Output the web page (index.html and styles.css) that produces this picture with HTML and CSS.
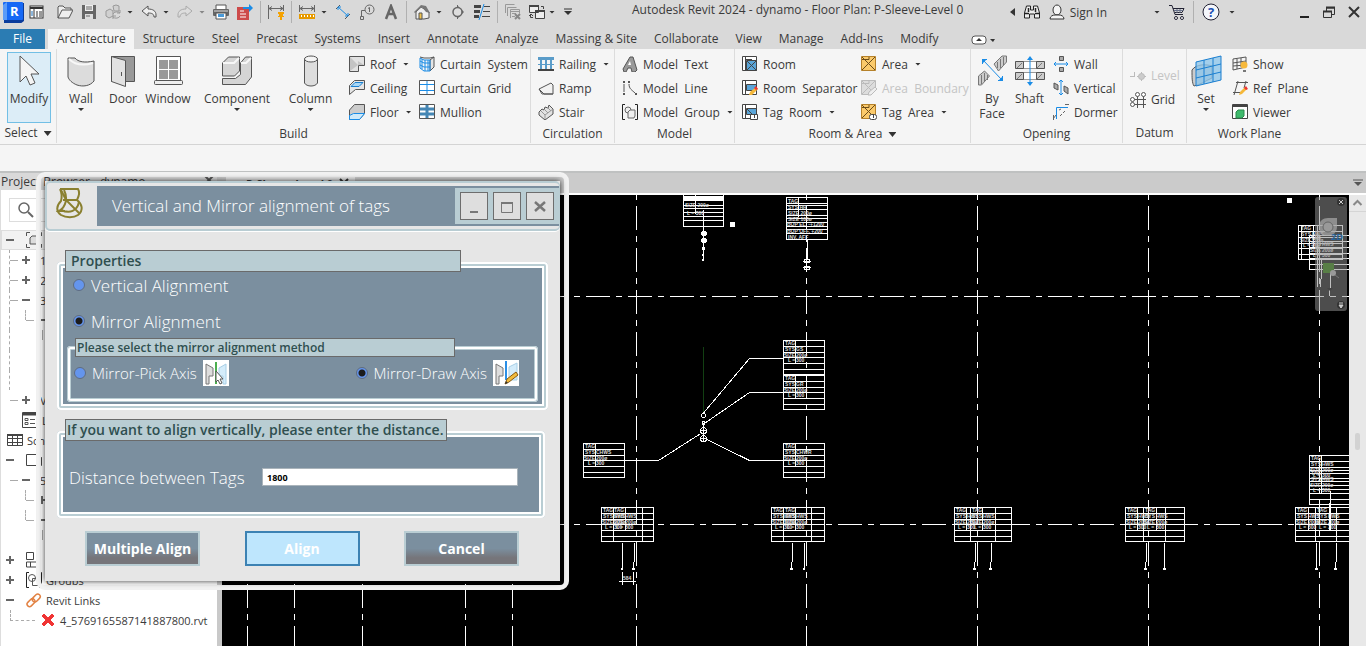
FILE: index.html
```html
<!DOCTYPE html>
<html lang="en">
<head>
    <meta charset="UTF-8">
    <meta name="viewport" content="width=device-width, initial-scale=1.0">
    <title>Autodesk Revit 2024 - dynamo</title>
    <link rel="stylesheet" href="styles.css">
</head>
<body>
    <!-- Title bar with quick access tools -->
    <header class="titlebar">
        <div class="quick">
            <svg class="logo" viewBox="0 0 22 22"><path d="M2 6l5-4h15v18l-4 3H2z" fill="#0b3c9c"/><rect x="1" y="1" width="20" height="18" rx="1" fill="#1668f5"/><path d="M1 4l4-3v18H1z" fill="#5b9bf8"/><text x="8" y="15" font-size="13" font-weight="700" fill="#fff">R</text></svg>
            <button class="ico home" aria-label="Home"><svg viewBox="0 0 16 16"><rect x="1" y="2" width="13" height="12" fill="#fff" stroke="#333"/><path d="M1 3h13v2H1z" fill="#333"/><path d="M5 5v9" stroke="#333"/><path d="M3 7v5" stroke="#1b6fb8"/><path d="M7 8h2m1 0h3M7 10h2m1 0h3M7 12h2m1 0h3" stroke="#333"/></svg></button>
            <button class="ico" aria-label="Open"><svg viewBox="0 0 16 16"><path d="M1 14V3l1-1h4l2 2h6v2M1 14L5 6h11l-4 8z" fill="#eee" stroke="#555"/></svg></button>
            <button class="ico" aria-label="Save"><svg viewBox="0 0 16 16"><path d="M1 1h14v14H1z" fill="#666"/><path d="M4 1h8v6H4z" fill="#eee"/><path d="M4 10h8v5H4z" fill="#ddd"/><path d="M5 3h6M5 5h6M5 12h4" stroke="#666"/></svg></button>
            <button class="ico" aria-label="Synchronize"><svg viewBox="0 0 16 16"><path d="M1 7l4-2 3 2v5l-4 2-3-2zM8 2l3-1 3 1v5H9z" fill="#d0d0d0" stroke="#999"/><path d="M8 10a4 3 0 0 1 7-1m0 3a4 3 0 0 1-7 1M15 6v3h-3M8 15v-3h3" fill="none" stroke="#999"/></svg></button>
            <span class="caret"></span>
            <button class="ico" aria-label="Undo"><svg viewBox="0 0 16 16"><path d="M1 7l6-5v3c5 0 8 2 8 6v2h-2c0-3-2-4-6-4v3z" fill="#eee" stroke="#555"/></svg></button>
            <span class="caret"></span>
            <button class="ico" aria-label="Redo"><svg viewBox="0 0 16 16"><path d="M15 7L9 2v3c-5 0-8 2-8 6v2h2c0-3 2-4 6-4v3z" fill="#ddd" stroke="#aaa"/></svg></button>
            <span class="caret faded"></span>
            <button class="ico" aria-label="Print"><svg viewBox="0 0 16 16"><path d="M3 1h10v5H3z" fill="#fff" stroke="#555"/><rect y="5" width="16" height="7" rx="1" fill="#666"/><path d="M1 7h14" stroke="#ddd"/><path d="M3 9h10v6H3z" fill="#fff" stroke="#555"/><path d="M5 10h6v3H5z" fill="#4a9ad8"/></svg></button>
            <button class="ico" aria-label="Export PDF"><svg viewBox="0 0 16 16"><path d="M0 3h12v13H0z" fill="#cd4a4a"/><path d="M3 7h4M3 10h6M3 13h6" stroke="#fff"/><path d="M6 3h6V0l4 4-4 4V5H6z" fill="#1a8ce6"/></svg></button>
            <span class="sep"></span>
            <button class="ico" aria-label="Align dimension"><svg viewBox="0 0 16 16"><path d="M.500 1v14M15.500 1v6M1 4.500h14M4 2.500l-3 2 3 2M12 2.500l3 2-3 2" fill="none" stroke="#666"/><path d="M10 8h6v2h-1v2h1v1h-6v-1h1v-2h-1zM12 12h2v4h-2z" fill="#f5a200"/></svg></button>
            <span class="sep"></span>
            <button class="ico" aria-label="Measure"><svg viewBox="0 0 16 16"><path d="M.500 1v7M15.500 1v7M1 4.500h14M4 2.500l-3 2 3 2M12 2.500l3 2-3 2" fill="none" stroke="#666"/><path d="M0 10h16v5H0z" fill="#e69a00"/><path d="M2.500 11v2m3-2v2m3-2v2m3-2v2m3-2v2" stroke="#fff"/></svg></button>
            <span class="caret"></span>
            <button class="ico" aria-label="Dimension"><svg viewBox="0 0 16 16"><path d="M1 5l4-4M10 15l5-5" stroke="#555"/><path d="M3 3l10 9M3 6V3h3M13 9v3h-3" fill="none" stroke="#1a8ce6"/></svg></button>
            <button class="ico" aria-label="Tag"><svg viewBox="0 0 16 16"><circle cx="10.500" cy="5.500" r="4.500" fill="none" stroke="#666"/><path d="M6 6.500H2.500V13M9 4.500l1.500-1V8M1.500 12.500h3v3h-3z" fill="none" stroke="#666"/></svg></button>
            <button class="ico" aria-label="Text"><svg viewBox="0 0 16 16"><path d="M3 15L8 2l5 13M5 10h6" fill="none" stroke="#666" stroke-width="2.500"/></svg></button>
            <span class="sep"></span>
            <button class="ico" aria-label="3D view"><svg viewBox="0 0 16 16"><path d="M2 8l5-5 8 5v6l-5 1H2z" fill="#eee" stroke="#555"/><path d="M0 8l7-7 5 1 4 7-4-1-4-5-7 6z" fill="#777"/><path d="M5 9h3v6H5z" fill="#f0c34e" stroke="#555"/></svg></button>
            <span class="caret"></span>
            <button class="ico" aria-label="Section"><svg viewBox="0 0 16 16"><path d="M7.500 1v14" stroke="#666"/><path d="M8 2l6 6-6 6" fill="#666"/><circle cx="7.500" cy="8" r="4.500" fill="#ddd" stroke="#666" stroke-width="1.500"/></svg></button>
            <button class="ico" aria-label="Thin lines"><svg viewBox="0 0 16 16"><path d="M0 2.500h7M0 7.500h6M0 12.500h5" stroke="#444" stroke-width="3"/><path d="M10 2.500h6M9 7.500h7M8 12.500h8" stroke="#444"/><path d="M10 0L5 16" stroke="#1a8ce6"/></svg></button>
            <span class="sep"></span>
            <button class="ico" aria-label="Close inactive"><svg viewBox="0 0 16 16"><path d="M.500 9V.500h9M2.500 12V3.500h9M5.500 14V5.500h9v4M5 7.500h9M7 9.500h4M7 12.500h3" fill="none" stroke="#999"/><path d="M10 10l5 5m0-5l-5 5" stroke="#888" stroke-width="2"/></svg></button>
            <button class="ico" aria-label="Switch windows"><svg viewBox="0 0 16 16"><path d="M.500 1.500h9v7h-9zM6.500 6.500h9v8h-9z" fill="#eee" stroke="#444"/><path d="M0 2h10M6 7h10" stroke="#444" stroke-width="2"/><path d="M12 2.500h2.500V5M4 13.500H1.500v-3M0 12l2-2 2 2" fill="none" stroke="#444"/></svg></button>
            <span class="caret near"></span>
            <svg class="custom" viewBox="0 0 10 8"><path d="M1 1h8" stroke="#333"/><path d="M1 3h8L5 7z" fill="#333"/></svg>
        </div>
        <h1 class="title">Autodesk Revit 2024 - dynamo - Floor Plan: P-Sleeve-Level 0</h1>
        <div class="account">
            <svg class="left-arrow" viewBox="0 0 5 8"><path d="M5 0v8L0 4z" fill="#333"/></svg>
            <button class="ico" aria-label="Search"><svg viewBox="0 0 16 16"><path d="M.500 9l2-7h4v4h3V2h4l2 7v5h-5v-4h-5v4h-5z" fill="#eee" stroke="#222"/><path d="M1 9.500h4M11 9.500h4M4.500 4v4m7-4v4" stroke="#222" stroke-width="1.500"/></svg></button>
            <button class="sign"><svg viewBox="0 0 16 16"><ellipse cx="8" cy="6" rx="4" ry="5" fill="#f5f5f5" stroke="#333"/><path d="M1 15c0-3 3-4 5-4h4c2 0 5 1 5 4z" fill="#f5f5f5" stroke="#333"/></svg>Sign In</button>
            <span class="caret wide"></span>
            <button class="ico" aria-label="Store"><svg viewBox="0 0 16 16"><path d="M0 1.500h3l3 9h8M4 4.500h11l-2 4H6" fill="none" stroke="#223"/><path d="M5 6.500h9M8 5v4m3-4v4" stroke="#66708a"/><circle cx="7" cy="14" r="1.500" stroke="#223" fill="#fff"/><circle cx="13" cy="14" r="1.500" stroke="#223" fill="#fff"/></svg></button>
            <span class="sep"></span>
            <button class="ico help" aria-label="Help"><svg viewBox="0 0 18 18"><circle cx="9" cy="9" r="8" fill="#f4f6fb" stroke="#223"/><text x="6" y="14" font-size="13" font-weight="700" fill="#1a4fb4">?</text></svg></button>
            <span class="caret"></span>
        </div>
        <div class="win">
            <button class="ico" aria-label="Minimize"><svg viewBox="0 0 16 16"><path d="M4 12h9v2H4z" fill="#222"/></svg></button>
            <button class="ico" aria-label="Restore"><svg viewBox="0 0 16 16"><path d="M5.500 4h8v6.500h-3M5.500 4v3" fill="none" stroke="#333"/><path d="M5 3.500h9M2 7.500h9" stroke="#333" stroke-width="2"/><path d="M2.500 7.500h8v6h-8z" fill="none" stroke="#333"/></svg></button>
            <button class="ico" aria-label="Close"><svg viewBox="0 0 16 16"><path d="M3 3l10 10M13 3L3 13" stroke="#333" stroke-width="2"/></svg></button>
        </div>
    </header>

    <!-- Ribbon tabs -->
    <nav class="tabs">
        <a class="tab file" href="#">File</a>
        <a class="tab active" href="#">Architecture</a>
        <a class="tab" href="#">Structure</a>
        <a class="tab" href="#">Steel</a>
        <a class="tab" href="#">Precast</a>
        <a class="tab" href="#">Systems</a>
        <a class="tab" href="#">Insert</a>
        <a class="tab" href="#">Annotate</a>
        <a class="tab" href="#">Analyze</a>
        <a class="tab" href="#">Massing &amp; Site</a>
        <a class="tab" href="#">Collaborate</a>
        <a class="tab" href="#">View</a>
        <a class="tab" href="#">Manage</a>
        <a class="tab" href="#">Add-Ins</a>
        <a class="tab" href="#">Modify</a>
        <svg class="tab-toggle" viewBox="0 0 24 10"><rect x="1" y="1" width="14" height="8" rx="3" fill="#fff" stroke="#555"/><path d="M5 6h6L8 3zM19 4h5l-2 3z" fill="#333"/></svg>
    </nav>

    <!-- Ribbon -->
    <section class="ribbon">
        <div class="panel panel-select">
            <div class="tools">
                <button class="big selected"><svg viewBox="0 0 32 32"><path d="M7 1v26l6-6 4 9 5-2-4-9h8z" fill="#f5f5f5" stroke="#555"/></svg>Modify</button>
            </div>
            <div class="panel-title">Select <span class="caret large"></span></div>
        </div>

        <div class="panel panel-build">
            <div class="tools">
                <button class="big"><svg viewBox="0 0 32 32"><path d="M3 3h7c3 4 10 5 19 3v20c-4 5-11 6-17 4-5-2-8-5-9-8z" fill="#dcdcdc" stroke="#555"/><path d="M4 4c6 6 14 7 24 4" fill="none" stroke="#f7f7f7" stroke-width="2"/></svg>Wall<span class="caret"></span></button>
                <button class="big"><svg viewBox="0 0 32 32"><path d="M4.500 1.500h23v25h-23z" fill="#999" stroke="#555"/><path d="M4.500 1.500l14 4v26l-14-5z" fill="#e2e2e2" stroke="#555"/><path d="M14.500 17v4" stroke="#555"/></svg>Door</button>
                <button class="big"><svg viewBox="0 0 32 32"><path d="M4.500 1.500h24v25h-24z" fill="#fff" stroke="#555"/><path d="M7 5h9v9H7zm10 0h9v9h-9zM7 15h9v9H7zm10 0h9v9h-9z" fill="#999"/><rect x="2.500" y="25.500" width="28" height="4" rx="1" fill="#eee" stroke="#555"/></svg>Window</button>
                <button class="big"><svg viewBox="0 0 32 32"><path d="M1.500 8l6-6h11v14l-5 5h-12zM1.500 23.500h13l5-4V8l5-6h6v20l-6 7.500h-23z" fill="#d5d5d5" stroke="#555"/><path d="M2 8h11l5-5M20 8h5l5-5" fill="none" stroke="#f7f7f7" stroke-width="2"/></svg>Component<span class="caret"></span></button>
                <button class="big"><svg viewBox="0 0 32 32"><path d="M9.500 4v24c2 4 11 4 13 0V4z" fill="#ddd" stroke="#555"/><ellipse cx="16" cy="4" rx="6.500" ry="3" fill="#f5f5f5" stroke="#555"/></svg>Column<span class="caret"></span></button>
                <div class="list">
                    <button class="small"><svg viewBox="0 0 16 16"><path d="M.500.500h15v9h-6v6h-9z" fill="#e2e2e2" stroke="#555"/><path d="M1 1l8 8-8 6zM9 9h6L9 5" fill="#c4c4c4"/></svg>Roof<span class="caret"></span></button>
                    <button class="small"><svg viewBox="0 0 16 16"><path d="M.500 5.500l5-5h10v9h-9l-6 5z" fill="#e5e5e5" stroke="#555"/><path d="M2 6.500l4-4h8l-4 4z" fill="#a9d7f5" stroke="#1a7fd0"/></svg>Ceiling</button>
                    <button class="small"><svg viewBox="0 0 16 16"><path d="M.500 6l5-5.500h10v9l-5 6h-10z" fill="#ccc" stroke="#555"/><path d="M.500 11.500l4-2h11l-5 6h-10z" fill="#cfeafa" stroke="#1a8ce6"/></svg>Floor<span class="caret"></span></button>
                </div>
                <div class="list">
                    <button class="small"><svg viewBox="0 0 16 16"><path d="M11 4l4-3v10l-4 4z" fill="#e5e5e5" stroke="#555"/><path d="M1 2l4 2h6v11H5l-4-3zM1 5l4 2h6M1 9l4 2h6M3 3v10M6 4v11M9 4v11" fill="none" stroke="#1a8ce6"/><path d="M1 1l4 1h6l4-1" fill="none" stroke="#555"/></svg>Curtain&nbsp; System</button>
                    <button class="small"><svg viewBox="0 0 16 16"><path d="M.500.500h15v14H.500z" fill="#fff" stroke="#555"/><path d="M8 1v13M1 4.500h14M1 10.500h14" stroke="#1a8ce6"/></svg>Curtain&nbsp; Grid</button>
                    <button class="small"><svg viewBox="0 0 16 16"><path d="M.500.500h15v14H.500z" fill="#fff" stroke="#555"/><path d="M8 1v13M1 5h14M1 10h14" stroke="#4587b5" stroke-width="3"/></svg>Mullion</button>
                </div>
            </div>
            <div class="panel-title">Build</div>
        </div>

        <div class="panel panel-circulation">
            <div class="tools">
                <div class="list">
                    <button class="small"><svg viewBox="0 0 16 16"><path d="M0 1h16v3H0zM2 4h2v9H2zm5 0h2v9H7zm5 0h2v9h-2zM0 8h16v1H0z" fill="#5a9cc9"/><path d="M0 14h16" stroke="#444" stroke-width="2"/></svg>Railing<span class="caret"></span></button>
                    <button class="small"><svg viewBox="0 0 16 16"><path d="M1 9l12-6 2 2v9H6z" fill="#f2f2f2" stroke="#555"/><path d="M1 9l3 5h11" fill="none" stroke="#555"/></svg>Ramp</button>
                    <button class="small"><svg viewBox="0 0 16 16"><path d="M1 8l3-3 2 1 1-3 3 1 1-3 4 4v5l-8 6-6-5z" fill="#e2e2e2" stroke="#555"/><path d="M7 15V11l8-6M3 7l4 4M6 5l4 4M9 3l4 4" fill="none" stroke="#999"/></svg>Stair</button>
                </div>
            </div>
            <div class="panel-title">Circulation</div>
        </div>

        <div class="panel panel-model">
            <div class="tools">
                <div class="list">
                    <button class="small"><svg viewBox="0 0 16 16"><path d="M1 13L8 1h3l4 13-2 2h-3l-1-4H6l-2 4H2z" fill="#999" stroke="#555"/><path d="M8 5l1 4H6z" fill="#fff"/></svg>Model&nbsp; Text</button>
                    <button class="small"><svg viewBox="0 0 16 16"><path d="M2 4v8M7 4c0 5 3 6 6 9" fill="none" stroke="#555"/><path d="M1 1h2v2H1zm0 12h2v2H1zM6 1h2v2H6zm7 12h2v2h-2z" fill="#555"/></svg>Model&nbsp; Line</button>
                    <button class="small"><svg viewBox="0 0 16 16"><path d="M3 .500H.500v15H3M13 .500h2.500v15H13" fill="none" stroke="#222"/><circle cx="6" cy="6" r="3" fill="#eee" stroke="#666"/><path d="M6 8l2-2h5v6l-1 2H6z" fill="#eee" stroke="#666"/></svg>Model&nbsp; Group<span class="caret"></span></button>
                </div>
            </div>
            <div class="panel-title">Model</div>
        </div>

        <div class="panel panel-room">
            <div class="tools">
                <div class="list">
                    <button class="small"><svg viewBox="0 0 16 16"><path d="M.500.500h14v14H.500z" fill="#fff" stroke="#444"/><path d="M4.500 4.500h10v10h-10z" fill="#5aa5d8" stroke="#444"/><path d="M3.500 1v13M4 3.500h6M5 5l9 9M14 5l-9 9" stroke="#444"/></svg>Room</button>
                    <button class="small"><svg viewBox="0 0 16 16"><path d="M.500.500h14v14H.500z" fill="#fff" stroke="#444"/><path d="M4.500 4.500h10v6h-10z" fill="#5aa5d8" stroke="#444"/><path d="M3.500 1v13" stroke="#444"/><path d="M7 15l1-3 6-5 2 2-6 6z" fill="#f5b83a"/><path d="M12 8l2-2 2 3-2 1z" fill="#e33"/></svg>Room&nbsp; Separator</button>
                    <button class="small"><svg viewBox="0 0 16 16"><path d="M.500.500h14v14H.500z" fill="#fff" stroke="#444"/><path d="M4.500 4.500h10v6h-10z" fill="#5aa5d8" stroke="#444"/><path d="M3.500 1v13M5 5l8 8" stroke="#444"/><path d="M8.500 10.500h7v5h-7z" fill="#fff" stroke="#444"/><path d="M12.500 11v3" stroke="#444"/></svg>Tag&nbsp; Room<span class="caret"></span></button>
                </div>
                <div class="list">
                    <button class="small"><svg viewBox="0 0 16 16"><path d="M.500.500h14v14H.500z" fill="#fbca6b" stroke="#b5812a"/><path d="M1 3.500h7V1M1 1l13 13M14 1L1 14" fill="none" stroke="#6b4c1a"/></svg>Area<span class="caret"></span></button>
                    <button class="small" disabled><svg viewBox="0 0 16 16"><path d="M.500.500h14v9l-6 5h-8z" fill="#ddd" stroke="#bbb"/><path d="M1 3.500h7V1M1 1l10 10M14 1L1 14" fill="none" stroke="#bbb"/><path d="M7 15l1-3 6-5 2 2-6 6z" fill="#eee" stroke="#bbb"/></svg>Area&nbsp; Boundary</button>
                    <button class="small"><svg viewBox="0 0 16 16"><path d="M.500.500h14v14H.500z" fill="#fbca6b" stroke="#b5812a"/><path d="M1 3.500h7V1M1 1l13 13M14 1L1 14" fill="none" stroke="#6b4c1a"/><rect x="8.500" y="10.500" width="7" height="5" rx="2" fill="#fff" stroke="#444"/><path d="M12.500 11v3" stroke="#444"/></svg>Tag&nbsp; Area<span class="caret"></span></button>
                </div>
            </div>
            <div class="panel-title">Room &amp; Area <span class="caret large"></span></div>
        </div>

        <div class="panel panel-opening">
            <div class="tools">
                <button class="big"><svg viewBox="0 0 32 32"><path d="M2.500 30v-9l6-5 5 5-8 9zM18 9l8-8h4.500v6l-8 9z" fill="#ccc" stroke="#777"/><path d="M5.500 20v9m3-11v9m3-7v5M21.500 7v6m3-9v9m3-11v8" stroke="#777"/><path d="M7 5l19 20M6.500 9V4.500H11M22 25.500h4.500V21" fill="none" stroke="#1a8ce6"/><path d="M6 4h5l-5 5zM27 26h-5l5-5z" fill="#1a8ce6"/></svg>By<br>Face</button>
                <button class="big"><svg viewBox="0 0 32 32"><path d="M2 6.500h28v7H2zM2 17.500h28v7H2z" fill="#fff" stroke="#999"/><path d="M1.500 6.500h8v7h-8zM22.500 6.500h8v7h-8zM1.500 17.500h8v7h-8zM22.500 17.500h8v7h-8z" fill="#ccc" stroke="#555"/><path d="M3 13l5-5m15 5l5-5M3 24l5-5m15 5l5-5" stroke="#777"/><path d="M16 3v26" stroke="#1a8ce6"/><path d="M13 5h6l-3-4zM13 27h6l-3 4z" fill="#1a8ce6"/></svg>Shaft</button>
                <div class="list">
                    <button class="small"><svg viewBox="0 0 16 16"><path d="M6.500.500h4v4h-4zM6.500 11.500h4v4h-4z" fill="#aaa" stroke="#555"/><path d="M1 8h14M3 6L1 8l2 2M13 6l2 2-2 2" fill="none" stroke="#1a8ce6"/></svg>Wall</button>
                    <button class="small"><svg viewBox="0 0 16 16"><path d="M1 3l4 2v5L1 8zM11 6l4 2v6l-4-3z" fill="#aaa" stroke="#555"/><path d="M8 0v15M6 2l2-2 2 2M6 13l2 2 2-2" fill="none" stroke="#1a8ce6"/></svg>Vertical</button>
                    <button class="small"><svg viewBox="0 0 16 16"><path d="M3.500 15V3.500H15" fill="none" stroke="#1a8ce6"/><path d="M0 15l3-4M7 12l2-2m1-1l2-2M12 .500h4M.500 11v5M6 6l2-1" stroke="#666"/></svg>Dormer</button>
                </div>
            </div>
            <div class="panel-title">Opening</div>
        </div>

        <div class="panel panel-datum">
            <div class="tools">
                <div class="list">
                    <button class="small" disabled><svg viewBox="0 0 16 16"><path d="M0 8.500h5M4.500 4v4M7 8.500h9M11.500 4v9" stroke="#bbb"/><circle cx="11.500" cy="8.500" r="3" fill="#ccc" stroke="#bbb"/></svg>Level</button>
                    <button class="small"><svg viewBox="0 0 16 16"><path d="M4 7.500h12M4 12.500h12M7.500 4v12M13.500 4v12" stroke="#555"/><circle cx="7.500" cy="2.500" r="2" fill="#fff" stroke="#555"/><circle cx="13.500" cy="2.500" r="2" fill="#fff" stroke="#555"/><circle cx="2.500" cy="7.500" r="2" fill="#fff" stroke="#555"/><circle cx="2.500" cy="12.500" r="2" fill="#fff" stroke="#555"/></svg>Grid</button>
                </div>
            </div>
            <div class="panel-title">Datum</div>
        </div>

        <div class="panel panel-plane">
            <div class="tools">
                <button class="big"><svg viewBox="0 0 32 32"><path d="M2 15c4-6 14-6 20-4v12c-7 3-12 7-18 8-2-3-2-8-2-16z" fill="#ccc" stroke="#555"/><path d="M6 7l25-6v24L6 31z" fill="#8fc6ea" fill-opacity=".8" stroke="#1a7fd0"/><path d="M14 5v24M23 3v24M6 15l25-6M6 23l25-6" stroke="#1a7fd0"/></svg>Set<span class="caret"></span></button>
                <div class="list">
                    <button class="small"><svg viewBox="0 0 16 16"><path d="M1 3l13-2v10L1 14zM5 3v10M9 2v9M1 7l13-2M1 10l13-1" fill="none" stroke="#555"/><circle cx="12" cy="9" r="3.500" fill="#f7b93c"/><path d="M11 14h3v2h-3z" fill="#777"/></svg>Show</button>
                    <button class="small"><svg viewBox="0 0 16 16"><path d="M1 12.500h8M4 2.500h12M6 1L2 15M14 1l-2 7" stroke="#555"/><path d="M7 15l1-3 5-5 2 2-5 5z" fill="#f5b83a"/><path d="M12 8l2-2 2 3-2 1z" fill="#e33"/></svg>Ref&nbsp; Plane</button>
                    <button class="small"><svg viewBox="0 0 16 16"><path d="M.500.500h15v14H.500z" fill="#fff" stroke="#444"/><path d="M0 2h16" stroke="#444" stroke-width="2"/><path d="M4 8l2-2h6v6l-2 2H4z" fill="#3fba6c" stroke="#2b8a4d"/></svg>Viewer</button>
                </div>
            </div>
            <div class="panel-title">Work Plane</div>
        </div>
    </section>

    <div class="options"></div>

    <!-- Browser and drawing area -->
    <main class="work">
        <aside class="browser">
            <div class="browser-head"><span>Project Browser - dynamo</span><svg viewBox="0 0 16 16"><path d="M4 3l8 8M12 3l-8 8" stroke="#555" stroke-width="2"/></svg></div>
            <div class="search"><svg viewBox="0 0 16 16"><circle cx="6" cy="6" r="5" fill="none" stroke="#666" stroke-width="1.500"/><path d="M10 10l5 5" stroke="#666" stroke-width="2"/></svg></div>
            <ul class="tree">
                <li class="root"><b class="minus"></b><svg viewBox="0 0 16 16"><path d="M.500 4V.500H4m8 0h3.500V4m0 8v3.500H12m-8 0H.500V12" fill="none" stroke="#555"/><path d="M4 6l2-2h6v6l-2 2H4z" fill="#ddd" stroke="#555"/></svg>V</li>
                <li class="sub trunk"><b class="plus"></b>1</li>
                <li class="sub trunk"><b class="plus"></b>2</li>
                <li class="sub trunk"><b class="minus"></b>3</li>
                <li class="deep trunk"><b class="minus"></b></li>
                <li class="leaf trunk"></li>
                <li class="trunk"></li>
                <li class="trunk"></li>
                <li class="sub"><b class="plus"></b>V</li>
                <li class="icon-row"><svg viewBox="0 0 16 16"><path d="M.500.500h15v15H.500z" fill="#fff" stroke="#444"/><path d="M1 2h14" stroke="#444" stroke-width="3"/><path d="M3 6.500h3v2H3zm0 4h3v2H3zM8 7.500h5M8 11.500h5" fill="none" stroke="#555"/></svg>L</li>
                <li class="table-row"><svg viewBox="0 0 16 16"><path d="M.500 2.500h15v11H.500zM1 6.500h14M1 10.500h14M5.500 2v12M10.500 2v12" fill="none" stroke="#444"/><path d="M0 3h16" stroke="#444" stroke-width="2"/></svg>Sch</li>
                <li><b class="minus"></b><svg viewBox="0 0 16 16"><path d="M.500 2.500h12l3 3v8H.500z" fill="#fff" stroke="#444"/><path d="M12 2v4h4z" fill="#444"/></svg>S</li>
                <li class="sub"><b class="minus"></b>5</li>
                <li class="deep"><b class="plus"></b></li>
                <li class="deep"><b class="minus"></b></li>
                <li class="leaf"></li>
                <li><b class="plus"></b><svg viewBox="0 0 16 16"><path d="M.500.500h7v7h-7zM10 .500h5M10.500 1v9H.500v5H15M4.500 10v5" fill="none" stroke="#444"/></svg>F</li>
                <li><b class="plus"></b><svg viewBox="0 0 16 16"><path d="M3 .500H.500v15H3M13 .500h2.500v15H13" fill="none" stroke="#222"/><circle cx="6" cy="6" r="3.500" fill="none" stroke="#555"/><path d="M6.500 6.500h6v7h-6z" fill="none" stroke="#555"/></svg>Groups</li>
                <li><b class="minus"></b><svg viewBox="0 0 16 16"><g fill="none" stroke="#e28243" stroke-width="1.500"><rect x="0" y="8" width="9" height="5" rx="2.500" transform="rotate(-45 5 10)"/><rect x="6" y="3" width="9" height="5" rx="2.500" transform="rotate(-45 11 6)"/></g></svg>Revit Links</li>
                <li class="link"><svg viewBox="0 0 16 16"><path d="M2 4l2-2 4 4 4-4 2 2-4 4 4 4-2 2-4-4-4 4-2-2 4-4z" fill="#f03434" stroke="#f03434"/></svg>4_5769165587141887800.rvt</li>
            </ul>
        </aside>
        <section class="view">
            <div class="view-head"><div class="view-tab">P-Sleeve-Level 0 <svg viewBox="0 0 16 16"><path d="M4 4l8 8M12 4l-8 8" stroke="#333" stroke-width="2"/></svg></div>
                <svg class="custom" viewBox="0 0 10 8"><path d="M0 1h10" stroke="#555"/><path d="M1 3h8L5 7z" fill="#555"/></svg></div>
            <div class="view-body">
                <svg class="drawing" viewBox="222 195 1127 451" preserveAspectRatio="xMinYMin slice">
                    <defs>
                        <g id="tag"><path d="M.5.5h41v34H.5zM.500 6.500h41M.500 12.500h41M.500 17.500h41M.500 23.500h41M.500 29.500h41M12.500.500v23"/><text class="note" x="2" y="5">TAG</text><text class="note" x="2" y="11">SYS</text><text class="note" x="1" y="17">SIZE</text><text class="note" x="5" y="22">L =</text><text class="note" x="13" y="17">200ø</text><text class="note" x="13" y="22">300</text></g>
                        <g id="cell"><text class="note" x="2" y="5">TAG</text><text class="note" x="2" y="11">SYS</text><text class="note" x="1" y="17">SIZE</text><text class="note" x="4" y="22">L =</text><text class="note" x="13" y="11">HWS</text><text class="note" x="13" y="17">200ø</text><text class="note" x="13" y="22">300</text></g>
                    </defs>
                    <!-- grid axes -->
                    <g class="axis">
                        <path d="M543.500 296.500H1349M543.500 524.500H1349"/>
                        <path d="M636.500 164V646M806.500 164V646M977.500 164V646M1148.500 164V646M1319.500 164V646"/>
                        <path d="M247.500 584V646M294.500 584V646M362.500 584V646M465.500 584V646M512.500 584V646"/>
                    </g>
                    <g class="ink">
                        <!-- stacked tags at the top -->
                        <path d="M683.500 190.500h40v36h-40zM683.500 205.500h40M683.500 208.500h40M683.500 212.500h40M683.500 216.500h40M683.500 220.500h40M695.500 190v24M703.500 210v50"/>
                        <path d="M684 196h40v5h-40zM702 231h4v5h-4zM701 232h6v3h-6zM702 238h4v5h-4zM701 239h6v3h-6zM702 247h3v3h-3zM702 254h2v2h-2zM702 259h2v2h-2zM730 222h5v5h-5zM1287 198h5v5h-5z" class="solid"/>
                        <text class="note" x="685" y="207">SIZE 200ø</text><text class="note" x="687" y="215">L = 300</text>
                        <path d="M786.500 197.500h41v42h-41zM786.500 203.500h41M786.500 205.500h41M786.500 209.500h41M786.500 215.500h41M786.500 218.500h41M786.500 222.500h41M786.500 226.500h41M786.500 229.500h41M786.500 233.500h41M798.500 197v20M807.500 239v20"/>
                        <text class="note" x="788" y="203">TAG</text><text class="note" x="788" y="209">SYS HR</text><text class="note" x="788" y="215">SIZE 200ø</text><text class="note" x="788" y="221">SIZE 100ø</text><text class="note" x="787" y="226">BOP EL. -+1200</text><text class="note" x="787" y="233">BOP OFF. +200</text><text class="note" x="788" y="239">INV. AFF</text>
                        <path d="M804.500 259.500h5v3h-5zM804.500 266.500h5v3h-5zM803 261.500h8M803 267.500h8M806.500 258v13"/>
                        <!-- leader fan -->
                        <path d="M703.500 347V412" class="guide"/>
                        <path d="M703.500 413L749.500 358.500H783M705 423L749.500 392.500H783M700 434L658.500 460.500H625M706 439L749.500 460.500H783"/>
                        <circle cx="703.500" cy="415.500" r="2"/><circle cx="703.500" cy="423" r="1.500"/><circle cx="703.500" cy="430.500" r="3"/><circle cx="703.500" cy="438.500" r="3"/><path d="M700 430.500h7M700 438.500h7M703.500 423v18"/>
                        <use href="#tag" x="783" y="340"/><text class="note" x="796" y="351">GS</text>
                        <use href="#tag" x="783" y="375"/><text class="note" x="796" y="386">GR</text>
                        <use href="#tag" x="583" y="443"/><text class="note" x="596" y="454">CHWS</text>
                        <use href="#tag" x="783" y="443"/><text class="note" x="796" y="454">CHWR</text>
                        <!-- paired tags on the lower axis -->
                        <path d="M601.500 507.500h52v34h-52zM601.500 513.500h52M601.500 519.500h52M601.500 524.500h52M601.500 530.500h52M601.500 536.500h52M613.500 507v34M625.500 507v23M642.500 507v34M622.500 543v26M634.500 543v12l-1 14"/>
                        <use href="#cell" x="601" y="507"/><use href="#cell" x="612" y="507"/>
                        <path d="M771.500 507.500h53v34h-53zM771.500 513.500h53M771.500 519.500h53M771.500 524.500h53M771.500 530.500h53M771.500 536.500h53M783.500 507v34M795.500 507v23M811.500 507v34M792.500 543v12l-1 14M804.500 543v26"/>
                        <use href="#cell" x="771" y="507"/><use href="#cell" x="783" y="507"/>
                        <path d="M954.500 507.500h57v34h-57zM954.500 513.500h57M954.500 519.500h57M954.500 524.500h57M954.500 530.500h57M954.500 536.500h57M966.500 507v23M970.500 507v34M982.500 507v23M995.500 507v34M975.500 543v12l-1 14M991.500 543v12l-1 14"/>
                        <use href="#cell" x="954" y="507"/><use href="#cell" x="970" y="507"/>
                        <path d="M1125.500 507.500h59v34h-59zM1125.500 513.500h59M1125.500 519.500h59M1125.500 524.500h59M1125.500 530.500h59M1125.500 536.500h59M1137.500 507v23M1143.500 507v34M1156.500 507v23M1165.500 507v34M1146.500 543v12l-1 14M1164.500 543v26"/>
                        <use href="#cell" x="1125" y="507"/><use href="#cell" x="1143" y="507"/>
                        <path d="M1295.500 507.500h60v34h-60zM1295.500 513.500h60M1295.500 519.500h60M1295.500 524.500h60M1295.500 530.500h60M1295.500 536.500h60M1308.500 507v23M1315.500 507v34M1329.500 507v23M1336.500 507v34M1316.500 543v26M1336.500 543v12l-1 14"/>
                        <use href="#cell" x="1295" y="507"/><use href="#cell" x="1315" y="507"/>
                        <path d="M621 568h2v2h-2zM632 568h3v2h-3zM790 568h3v2h-3zM803 568h2v2h-2zM973 568h3v2h-3zM989 568h3v2h-3zM1144 568h3v2h-3zM1163 568h3v2h-3zM1315 568h3v2h-3zM1334 568h3v2h-3z" class="solid"/>
                        <path d="M619 581.500h17M622.500 572v13M633.500 572v13"/><text class="note" x="623" y="580">584</text>
                        <!-- right edge tags -->
                        <path d="M1298.500 225.500h44v34h-44zM1298.500 231.500h44M1298.500 237.500h44M1298.500 243.500h44M1298.500 248.500h44M1298.500 254.500h44M1301.500 225v34M1313.500 225v23M1309.500 235.500h44v34h-44zM1309.500 241.500h44M1309.500 247.500h44M1309.500 253.500h44M1309.500 258.500h44M1309.500 264.500h44M1321.500 260v12l-1 15M1330.500 272v12l-1 12M1317.500 225v62"/>
                        <use href="#cell" x="1299" y="225"/><use href="#cell" x="1309" y="235"/>
                        <path d="M1309.500 455.500h44v49h-44zM1309.500 461.500h44M1309.500 467.500h44M1309.500 470.500h44M1309.500 473.500h44M1309.500 478.500h44M1309.500 481.500h44M1309.500 485.500h44M1309.500 489.500h44M1309.500 493.500h44M1309.500 499.500h44M1321.500 455v38M1330.500 491v40M1329.500 503v28"/>
                        <use href="#cell" x="1309" y="455"/><use href="#cell" x="1309" y="470"/>
                    </g>
                </svg>
                <div class="navbar">
                    <svg viewBox="0 0 32 114"><circle cx="26" cy="5" r="4" fill="#333"/><path d="M24 3l4 4m0-4l-4 4" stroke="#ccc"/><path d="M4 30c0-6 4-9 9-9h9v9c0 5-4 9-9 9s-9-3-9-9z" fill="#aaa" fill-opacity=".7"/><circle cx="13" cy="30" r="5" fill="#999" stroke="#666"/><text x="16" y="43" font-size="9" font-weight="700" fill="#27649d">2D</text><path d="M8 66h11v10H8z" fill="#587e46"/><circle cx="18" cy="76" r="3" fill="#999"/><path d="M20 78l4 3" stroke="#777"/><path d="M12 91h6l-3 3z" fill="#444"/><circle cx="26" cy="108" r="4" fill="#333"/><path d="M24 106h4M24 108h4l-2 3z" fill="#ccc" stroke="#ccc"/></svg>
                </div>
                <div class="scroll"><svg viewBox="0 0 16 16"><path d="M4 10l4-4 4 4" fill="none" stroke="#888" stroke-width="2"/></svg><span class="thumb"></span></div>
            </div>
        </section>
    </main>

    <!-- Alignment dialog -->
    <div class="dialog">
        <form class="dialog-body">
            <div class="dialog-head">
                <svg class="brand" viewBox="0 0 28 32"><g fill="none" stroke="#8a8030" stroke-width="2"><path d="M4 2h18c2 3 1 7-1 11M4 2c2 4 2 8 1 12-5 5-5 10 0 14 5 3 13 3 17 0 6-5 4-11-1-15H7"/><path d="M5 3l5 10 13 13M8 3c4 8 2 17-5 21h6M23 15c-2 9-9 12-18 8"/></g></svg>
                <div class="dialog-title">Vertical and Mirror alignment of tags
                    <div class="dialog-win">
                        <button type="button" aria-label="Minimize"><svg viewBox="0 0 16 16"><path d="M4 14h8" stroke="#777" stroke-width="2"/></svg></button>
                        <button type="button" aria-label="Maximize"><svg viewBox="0 0 16 16"><path d="M2.500 4.500h11v10h-11z" fill="none" stroke="#777"/><path d="M2 5h12" stroke="#777" stroke-width="2"/></svg></button>
                        <button type="button" aria-label="Close"><svg viewBox="0 0 16 16"><path d="M3 4l10 9M13 4L3 13" stroke="#777" stroke-width="2.500"/></svg></button>
                    </div>
                </div>
            </div>

            <fieldset class="group group-props">
                <legend>Properties</legend>
                <div class="radio-row"><input type="radio" id="vertical" name="mode"><label for="vertical">Vertical Alignment</label></div>
                <div class="radio-row"><input type="radio" id="mirror" name="mode" checked><label for="mirror">Mirror Alignment</label></div>
                <fieldset class="group inner">
                    <legend>Please select the mirror alignment method</legend>
                    <div class="methods">
                        <div class="method"><input type="radio" id="pick" name="method"><label for="pick">Mirror-Pick Axis</label>
                            <svg viewBox="0 0 26 26"><path d="M0 0h26v26H0z" fill="#fff"/><path d="M3 4l7 4v8H6v8H3z" fill="#ddd" stroke="#777"/><path d="M23 4l-7 4v8h4v8h3z" fill="#d4ecfa" stroke="#a8cfe6"/><path d="M13 2v22" stroke="#4caf50" stroke-width="2"/><path d="M13 11v11l2-2 2 4 2-1-2-4h3z" fill="#fff" stroke="#555"/></svg></div>
                        <div class="method"><input type="radio" id="draw" name="method" checked><label for="draw">Mirror-Draw Axis</label>
                            <svg viewBox="0 0 26 26"><path d="M0 0h26v26H0z" fill="#fff"/><path d="M3 4l7 4v8H6v8H3z" fill="#ddd" stroke="#777"/><path d="M24 3l-8 4v13h8z" fill="#d4ecfa" stroke="#a8cfe6"/><path d="M13 1v19" stroke="#2a8fe6" stroke-width="2"/><path d="M12 24l2-5 9-7 2 3-9 7z" fill="#f2bb3c" stroke="#8a5a10"/><path d="M12 24l1-3 2 2z" fill="#333"/></svg></div>
                    </div>
                </fieldset>
            </fieldset>

            <fieldset class="group group-distance">
                <legend>If you want to align vertically, please enter the distance.</legend>
                <div class="distance"><label for="distance">Distance between Tags</label><input type="text" id="distance" value="1800"></div>
            </fieldset>

            <div class="actions">
                <button type="button">Multiple Align</button>
                <button type="button" class="hot">Align</button>
                <button type="button">Cancel</button>
            </div>
        </form>
    </div>
</body>
</html>
```

FILE: styles.css
```css
* {
    box-sizing: border-box;
}

body {
    margin: 0;
    height: 100vh;
    display: flex;
    flex-direction: column;
    overflow: hidden;
    position: relative;
    background: #f5f5f5;
    color: #3a3a3a;
    font-family: "Open Sans", "Noto Sans", sans-serif;
    font-size: 12px;
}

button {
    margin: 0;
    padding: 0;
    border: 0;
    background: none;
    color: inherit;
    font: inherit;
}

svg {
    display: block;
    flex: none;
}

/* Small shared pieces */
.caret {
    flex: none;
    width: 6px;
    height: 3px;
    background: #333;
    clip-path: polygon(0 0, 100% 0, 50% 100%);
}

.caret.large {
    display: inline-block;
    width: 8px;
    height: 5px;
    margin-left: 3px;
    vertical-align: 1px;
}

.sep {
    width: 1px;
    height: 22px;
    margin: 0 -1px;
    background: #b0b0b0;
}

.ico svg {
    width: 16px;
    height: 16px;
}

.custom {
    width: 10px;
    height: 8px;
}

/* Title bar */
.titlebar {
    display: flex;
    flex: none;
    height: 29px;
    padding: 0 4px 5px 2px;
    background: #d9d9d9;
}

.quick {
    display: flex;
    align-items: center;
    gap: 8px;
    margin-right: 59px;
}

.quick .caret {
    margin-left: -2px;
}

.quick .caret.near {
    margin-left: -4px;
}

.quick .home {
    margin: 0 4px 0 -3px;
}

.caret.faded {
    opacity: .5;
}

.logo {
    width: 22px;
    height: 22px;
}

.title {
    flex: 1;
    margin: 0;
    font-size: 12px;
    font-weight: 400;
    line-height: 20px;
    white-space: nowrap;
}

.account {
    display: flex;
    align-items: center;
    gap: 9px;
    margin-right: 61px;
}

.left-arrow {
    width: 5px;
    height: 8px;
}

.sign {
    display: flex;
    align-items: center;
    gap: 5px;
}

.sign svg {
    width: 16px;
    height: 16px;
}

.caret.wide {
    margin-left: 38px;
}

.help svg {
    width: 18px;
    height: 18px;
}

.win {
    display: flex;
    align-items: center;
    gap: 9px;
}

/* Tabs */
.tabs {
    display: flex;
    flex: none;
    height: 20px;
    background: #d9d9d9;
}

.tab {
    padding: 0 8px 0 9px;
    color: #3a3a3a;
    line-height: 20px;
    text-decoration: none;
    white-space: nowrap;
}

.tab.file {
    width: 45px;
    padding: 0;
    margin-right: 3px;
    background: #2b7cb3;
    color: #fff;
    text-align: center;
}

.tab.active {
    background: #f5f5f5;
}

.tab-toggle {
    width: 24px;
    height: 10px;
    margin: 6px 24px;
}

/* Ribbon */
.ribbon {
    display: flex;
    flex: none;
    height: 96px;
    border-bottom: 1px solid #d4d4d4;
}

.panel {
    display: flex;
    flex-direction: column;
    flex: none;
    height: 94px;
    padding-top: 3px;
    border-right: 1px solid #dcdcdc;
}

.panel-select { width: 57px; }
.panel-build { width: 474px; }
.panel-circulation { width: 84px; }
.panel-model { width: 120px; }
.panel-room { width: 236px; }
.panel-opening { width: 152px; }
.panel-datum { width: 64px; }
.panel-plane { width: 125px; border-right: 0; }

.tools {
    display: grid;
    height: 72px;
}

.panel-select .tools { padding: 0 5px 0 7px; }
.panel-build .tools { grid-template-columns: 48px 36px 54px 84px 63px 70px 1fr; }
.panel-room .tools { grid-template-columns: 119px 1fr; }
.panel-opening .tools { grid-template-columns: 42px 33px 1fr; }
.panel-plane .tools { grid-template-columns: 38px 1fr; }

.panel-title {
    line-height: 20px;
    text-align: center;
    white-space: nowrap;
}

.big {
    display: flex;
    flex-direction: column;
    align-items: center;
    padding-top: 3px;
    line-height: 15px;
    white-space: nowrap;
}

.big svg {
    width: 32px;
    height: 32px;
    margin-bottom: 4px;
}

.big .caret {
    margin-top: 2px;
}

.big.selected {
    padding-top: 2px;
    border: 1px solid #72bfe5;
    background: #dcedf7;
}

.list {
    display: flex;
    flex-direction: column;
    align-items: flex-start;
    justify-content: center;
    padding-left: 7px;
}

.small {
    display: flex;
    align-items: center;
    gap: 5px;
    height: 24px;
    white-space: nowrap;
}

.small svg {
    width: 16px;
    height: 16px;
}

.small .caret {
    margin-left: 2px;
}

.small:disabled {
    color: #c4c4c4;
}

.options {
    flex: none;
    height: 26px;
    background: #f5f5f5;
}

/* Work area */
.work {
    display: flex;
    flex: 1;
    min-height: 0;
    border-top: 2px solid #bfc1c1;
}

.browser {
    flex: none;
    width: 222px;
    border-left: 1px solid #ddd;
    border-right: 5px solid #c9c9c9;
    background: #fff;
}

.browser-head {
    display: flex;
    justify-content: space-between;
    height: 17px;
    background: #d9d9d9;
    line-height: 17px;
}

.browser-head svg {
    width: 16px;
    height: 16px;
}

.search {
    height: 24px;
    margin: 8px;
    padding: 3px 8px;
    border: 1px solid #ddd;
}

.search svg {
    width: 16px;
    height: 16px;
}

.tree {
    margin: 0;
    padding: 0;
    list-style: none;
    font-size: 11px;
}

.tree li {
    display: flex;
    align-items: center;
    gap: 5px;
    height: 20px;
    padding-left: 5px;
    position: relative;
    white-space: nowrap;
}

.tree svg {
    width: 16px;
    height: 16px;
    margin: 0 -1px 0 7px;
}

.tree .root {
    border: 1px solid #ddd;
    background: #f2f2f2;
    padding-left: 4px;
}

/* Dashed connector down the left side of the views branch */
.tree .trunk::after {
    content: "";
    position: absolute;
    top: 0;
    bottom: 0;
    left: 8px;
    border-left: 1px dashed #aaa;
}

.tree .sub {
    padding-left: 21px;
    gap: 10px;
    background: linear-gradient(#aaa, #aaa) 9px 10px / 8px 1px no-repeat;
}

.tree .deep {
    padding-left: 37px;
    background: linear-gradient(#aaa, #aaa) 25px 10px / 8px 1px no-repeat;
}

.tree .deep::before {
    content: "";
    position: absolute;
    top: 0;
    left: 24px;
    height: 10px;
    border-left: 1px dashed #aaa;
}

.tree .leaf {
    background: linear-gradient(#aaa, #aaa) 41px 0 / 1px 10px no-repeat;
}

.tree .icon-row {
    padding-left: 14px;
}

.tree .table-row {
    padding-left: 0;
}

.tree .table-row svg {
    margin-left: 6px;
}

.tree .link {
    padding-left: 9px;
}

.tree .link::before {
    content: "";
    align-self: flex-start;
    width: 24px;
    height: 10px;
    border-left: 1px dashed #aaa;
    border-bottom: 1px dashed #aaa;
}

.tree .link svg {
    margin-left: 0;
}

.minus,
.plus {
    flex: none;
    width: 8px;
    height: 8px;
    background: linear-gradient(#666, #666) center / 8px 2px no-repeat;
}

.plus {
    background: linear-gradient(#666, #666) center / 8px 2px no-repeat, linear-gradient(#666, #666) center / 2px 8px no-repeat;
}

.view {
    display: flex;
    flex: 1;
    flex-direction: column;
    min-width: 0;
}

.view-head {
    display: flex;
    flex: none;
    align-items: center;
    justify-content: space-between;
    height: 22px;
    padding: 0 3px 0 4px;
    border-bottom: 2px solid #fff;
    background: #cbcbcb;
}

.view-tab {
    display: flex;
    align-items: center;
    gap: 3px;
    height: 20px;
    padding: 0 3px 0 20px;
    background: #e8e8e8;
    font-size: 11px;
    font-weight: 700;
}

.view-tab svg {
    width: 16px;
    height: 16px;
}

.view-body {
    display: flex;
    flex: 1;
    min-height: 0;
    position: relative;
    background: #000;
}

.drawing {
    flex: 1;
    min-width: 0;
    height: 100%;
    shape-rendering: crispEdges;
}

.axis {
    fill: none;
    stroke: #fff;
    stroke-dasharray: 24 6 6 6;
}

.ink {
    fill: none;
    stroke: #fff;
}

.guide {
    stroke: #123f12;
}

.solid {
    fill: #fff;
    stroke: none;
}

.note {
    fill: #ddd;
    stroke: none;
    font-family: "Liberation Sans", sans-serif;
    font-size: 5px;
    font-weight: 700;
}

.navbar {
    position: absolute;
    top: 2px;
    right: 19px;
    width: 32px;
    height: 114px;
    border-radius: 3px;
    background: rgba(140, 140, 140, .55);
}

.scroll {
    flex: none;
    width: 17px;
    background: #e8e8e8;
}

.scroll svg {
    width: 17px;
    height: 17px;
    border-bottom: 1px solid #d5d5d5;
}

.thumb {
    display: block;
    width: 5px;
    height: 17px;
    margin: 221px 6px 0;
    border-radius: 2px;
    background: #d2d2d2;
}

/* Alignment dialog */
.dialog {
    position: absolute;
    top: 172px;
    left: 36px;
    width: 533px;
    padding: 4px;
    border: 5px solid #f2f2f2;
    border-radius: 9px;
}

.dialog-body {
    padding-bottom: 15px;
    background: #e6e6e6;
    box-shadow: 0 0 6px rgba(0, 0, 0, .8);
    color: #fff;
}

.dialog-head {
    display: flex;
    align-items: center;
    height: 50px;
    padding-left: 9px;
    border: 2px solid #b9cdd3;
    border-right-width: 1px;
    border-radius: 5px;
    box-shadow: 0 1px 0 #fff;
}

.brand {
    width: 28px;
    height: 32px;
    margin-bottom: 6px;
}

.dialog-title {
    display: flex;
    flex: 1;
    align-items: center;
    justify-content: space-between;
    height: 40px;
    margin-left: 13px;
    padding-left: 15px;
    background: #7b8f9f;
    font-size: 17px;
    font-weight: 300;
    line-height: 20px;
    white-space: nowrap;
}

.dialog-win {
    display: flex;
    gap: 5px;
    padding: 4px 5px;
    background: #b9cdd3;
}

.dialog-win button {
    width: 28px;
    height: 28px;
    padding: 5px;
    border: 1px solid #6d6d6d;
    background: #dedede;
}

.dialog-win svg {
    width: 16px;
    height: 16px;
}

.group {
    min-width: 0;
    margin: 0;
    padding: 6px;
    border: 0;
    border-radius: 4px;
    background: #7b8f9f;
    box-shadow: inset 0 0 0 2px #fff, inset 0 0 0 4px #b9cdd3, inset 0 0 0 6px #fff;
}

.group legend {
    float: left;
    width: 396px;
    height: 22px;
    margin: -18px 0 0 2px;
    padding: 0 5px;
    border: 1px solid #6a6a6a;
    background: #b9cdd3;
    color: #2f4f4f;
    font-size: 14px;
    font-weight: 600;
    line-height: 20px;
    white-space: nowrap;
}

.group-props {
    margin: 31px 12px 0;
    padding-bottom: 8px;
}

.group-distance {
    margin: 21px 15px 0 12px;
    padding-bottom: 32px;
}

.group-distance legend {
    width: 382px;
    padding: 0 1px;
}

.group.inner {
    clear: both;
    margin: 12px 4px 0;
    padding: 4px 4px 16px;
    box-shadow: inset 0 0 0 1px #b9cdd3, inset 0 0 0 3px #fff, inset 0 0 0 4px #b9cdd3;
}

.group.inner legend {
    width: 380px;
    height: 19px;
    margin: -12px 0 0 4px;
    padding: 0 1px;
    font-size: 12px;
    line-height: 17px;
}

.radio-row {
    display: flex;
    clear: both;
    align-items: center;
    gap: 6px;
    height: 26px;
    margin-left: 10px;
    font-size: 17px;
    font-weight: 300;
}

.radio-row + .radio-row {
    margin-top: 10px;
}

.dialog input[type="radio"] {
    appearance: none;
    width: 12px;
    height: 12px;
    margin: 0;
    border: 1px solid #5f6c80;
    border-radius: 50%;
    background: #6495ed;
}

.dialog input[type="radio"]:checked {
    background: radial-gradient(circle, #1c1c1c 3px, #6495ed 4px);
}

.methods {
    display: flex;
    clear: both;
    justify-content: space-between;
    padding: 3px 15px 0 3px;
}

.method {
    display: flex;
    align-items: center;
    gap: 6px;
    height: 26px;
    font-size: 15px;
    font-weight: 300;
}

.method svg {
    width: 26px;
    height: 26px;
}

.distance {
    display: flex;
    clear: both;
    align-items: center;
    justify-content: space-between;
    height: 45px;
    padding: 27px 21px 0 6px;
    font-size: 17px;
    font-weight: 300;
}

.distance input {
    width: 256px;
    height: 18px;
    padding: 0 4px;
    border: 1px solid #aab4bb;
    background: #fff;
    color: #000;
    font: 700 9px "Open Sans", sans-serif;
}

.actions {
    display: flex;
    justify-content: space-between;
    padding: 13px 41px 0 40px;
}

.actions button {
    width: 115px;
    height: 35px;
    border: 2px solid #b9cdd3;
    background: linear-gradient(#7b8f9f 50%, #76757a 80%);
    color: #fff;
    font-size: 14px;
    font-weight: 700;
    white-space: nowrap;
}

.actions .hot {
    border-color: #3c82b3;
    background: #bee6fd;
}
```
